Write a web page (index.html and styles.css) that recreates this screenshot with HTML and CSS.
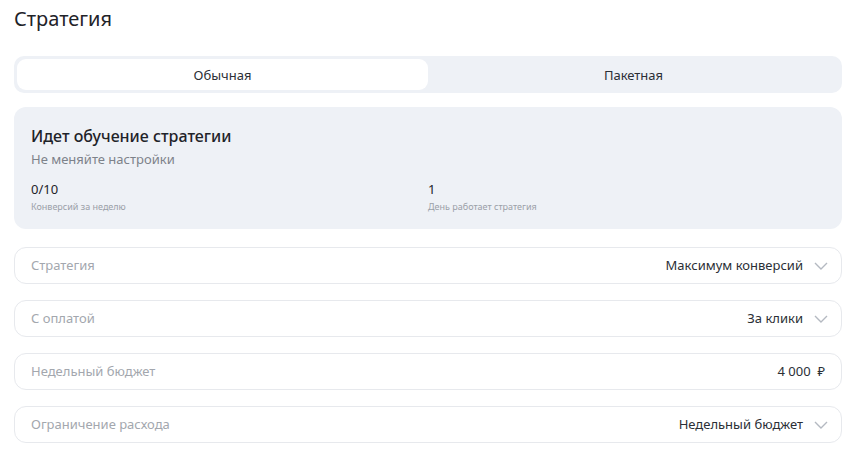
FILE: index.html
```html
<!DOCTYPE html>
<html lang="ru">

<head>
  <meta charset="UTF-8">
  <meta name="viewport" content="width=device-width, initial-scale=1.0">
  <title>Стратегия</title>
  <link rel="stylesheet" href="styles.css">
</head>

<body>
  <div class="page">
    <h1 class="page-title">Стратегия</h1>

    <div class="tabs">
      <div class="tab tab-active">Обычная</div>
      <div class="tab">Пакетная</div>
    </div>

    <div class="learning">
      <div class="learning-title">Идет обучение стратегии</div>
      <div class="learning-sub">Не меняйте настройки</div>
      <div class="stats">
        <div class="stat">
          <div class="stat-value">0/10</div>
          <div class="stat-label">Конверсий за неделю</div>
        </div>
        <div class="stat">
          <div class="stat-value">1</div>
          <div class="stat-label">День работает стратегия</div>
        </div>
      </div>
    </div>

    <div class="fields">
      <div class="field">
        <span class="field-label">Стратегия</span>
        <span class="field-value">Максимум конверсий</span>
        <svg class="chevron" width="16" height="16" viewBox="0 0 16 16"><path d="M2 5l6 6 6-6" fill="none" stroke="#b4b9c1" stroke-width="1.4"/></svg>
      </div>
      <div class="field">
        <span class="field-label">С оплатой</span>
        <span class="field-value">За клики</span>
        <svg class="chevron" width="16" height="16" viewBox="0 0 16 16"><path d="M2 5l6 6 6-6" fill="none" stroke="#b4b9c1" stroke-width="1.4"/></svg>
      </div>
      <div class="field">
        <span class="field-label">Недельный бюджет</span>
        <span class="field-value field-money">4 000&nbsp; ₽</span>
      </div>
      <div class="field">
        <span class="field-label">Ограничение расхода</span>
        <span class="field-value">Недельный бюджет</span>
        <svg class="chevron" width="16" height="16" viewBox="0 0 16 16"><path d="M2 5l6 6 6-6" fill="none" stroke="#b4b9c1" stroke-width="1.4"/></svg>
      </div>
    </div>
  </div>
</body>

</html>
```

FILE: styles.css
```css
body {
  margin: 0;
  font-family: "Noto Sans", Arial, sans-serif;
  color: #1f2329;
  background: #ffffff;
}

.page {
  width: 828px;
  padding: 0 7px 0 14px;
}

.page-title {
  margin: 0;
  padding-top: 6px;
  height: 50px;
  font-size: 20px;
  font-weight: 400;
  line-height: 26px;
}

.tabs {
  display: flex;
  height: 37px;
  padding: 3px;
  box-sizing: border-box;
  background: #eef1f6;
  border-radius: 10px;
}

.tab {
  flex: 1;
  display: flex;
  align-items: center;
  justify-content: center;
  font-size: 13px;
  color: #2b2f36;
  border-radius: 9px;
}

.tab-active {
  background: #ffffff;
}

.learning {
  margin-top: 14px;
  background: #eef1f6;
  border-radius: 12px;
  padding: 18px 17px 15px;
  height: 122px;
  box-sizing: border-box;
}

.learning-title {
  font-size: 16px;
  font-weight: 500;
  line-height: 22px;
}

.learning-sub {
  margin-top: 3px;
  font-size: 13px;
  color: #7d828a;
  line-height: 18px;
}

.stats {
  display: flex;
  margin-top: 12px;
}

.stat {
  width: 397px;
}

.stat-value {
  font-size: 13px;
  line-height: 18px;
}

.stat-label {
  margin-top: 3px;
  font-size: 9px;
  color: #9ba0a8;
  line-height: 12px;
}

.fields {
  margin-top: 18px;
  display: flex;
  flex-direction: column;
  gap: 16px;
}

.field {
  display: flex;
  align-items: center;
  height: 37px;
  box-sizing: border-box;
  border: 1px solid #e7e9ed;
  border-radius: 12px;
  padding: 0 12px 2px 16px;
}

.field-label {
  flex: 1;
  font-size: 13px;
  color: #a3a7ae;
}

.field-value {
  font-size: 13px;
  color: #2b2f36;
}

.field-money {
  margin-right: 4px;
}

.chevron {
  margin-left: 10px;
  margin-top: 2px;
}
```
